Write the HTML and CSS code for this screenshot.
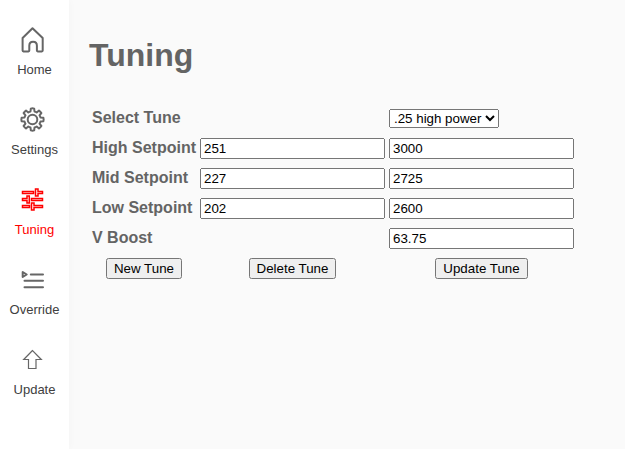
FILE: index.html
```html
<!DOCTYPE html>
<html lang="en">
<head>
<meta charset="utf-8">
<title>Tuning</title>
<link rel="stylesheet" href="styles.css">
</head>
<body>
<nav class="sidebar">
  <a class="item" href="#home"><svg class="icon" viewBox="0 0 32 32"><path stroke-width="2" d="M6.6 14 16.5 4.2 26.7 14v12.6q0 .8-.8.8h-4.2q-.8 0-.8-.8V21.7q0-4-3.800-4t-3.800 4v4.900q0 .8-.8.8H7.400q-.8 0-.8-.8z"/></svg><span>Home</span></a>
  <a class="item" href="#settings"><svg class="icon" viewBox="0 0 32 32"><g transform="translate(16.5 15.5)" stroke-width="2"><circle r="4.800"/><path d="M-1.700-10.900Q0-11.400 1.700-10.900L2-8Q3.200-7.700 4.200-7L6.500-8.900Q7.900-7.900 8.900-6.500L7-4.200Q7.700-3.200 8-2L10.900-1.700Q11.400 0 10.900 1.700L8 2Q7.700 3.200 7 4.200L8.900 6.500Q7.900 7.900 6.500 8.900L4.200 7Q3.200 7.700 2 8L1.700 10.900Q0 11.400-1.700 10.900L-2 8Q-3.200 7.700-4.200 7L-6.500 8.900Q-7.900 7.900-8.900 6.500L-7 4.200Q-7.700 3.200-8 2L-10.900 1.700Q-11.400 0-10.900-1.700L-8-2Q-7.700-3.200-7-4.200L-8.900-6.500Q-7.900-7.900-6.500-8.900L-4.200-7Q-3.200-7.700-2-8z"/></g></svg><span>Settings</span></a>
  <a class="item active" href="#tuning"><svg class="icon" viewBox="0 0 32 32"><path stroke-width="1.5" stroke-linejoin="miter" d="M6.500 7.500h11v2h-11zM19.500 5h2.500v2.500h4.500v2h-4.500v2.500h-2.500zM6.500 14.500h4.500v-2.500h2.300v7h-2.300v-2.500H6.500zM15.500 14.500h11v2h-11zM6.500 21.500h7v2h-7zM15.500 19H18v2.500h8.500v2h-8.500v2.500h-2.500z"/></svg><span>Tuning</span></a>
  <a class="item" href="#override"><svg class="icon" viewBox="0 0 32 32"><path d="M14.800 10.500H27M8.500 16.700H27M8.500 23.300H27"/><path d="M6.700 8v5l4-2.500z"/></svg><span>Override</span></a>
  <a class="item" href="#update"><svg class="icon" viewBox="0 0 32 32"><path stroke-width="1.2" stroke-linejoin="miter" d="M16.500 6.500 7.700 15.500h4.800v9h7.500v-9h5.300z"/></svg><span>Update</span></a>
</nav>
<main class="content">
  <h1>Tuning</h1>
  <form>
  <table>
    <tr><th scope="row"><label for="tune">Select Tune</label></th><td></td><td><select id="tune"><option>.25 high power</option></select></td></tr>
    <tr><th scope="row"><label for="high">High Setpoint</label></th><td><input id="high" type="text" value="251"></td><td><input type="text" aria-label="High Setpoint value" value="3000"></td></tr>
    <tr><th scope="row"><label for="mid">Mid Setpoint</label></th><td><input id="mid" type="text" value="227"></td><td><input type="text" aria-label="Mid Setpoint value" value="2725"></td></tr>
    <tr><th scope="row"><label for="low">Low Setpoint</label></th><td><input id="low" type="text" value="202"></td><td><input type="text" aria-label="Low Setpoint value" value="2600"></td></tr>
    <tr><th scope="row"><label for="boost">V Boost</label></th><td></td><td><input id="boost" type="text" value="63.75"></td></tr>
    <tr class="actions"><td><button type="button">New Tune</button></td><td><button type="button">Delete Tune</button></td><td><button type="button">Update Tune</button></td></tr>
  </table>
  </form>
</main>
</body>
</html>
```

FILE: styles.css
```css
* { box-sizing: border-box; }
body { margin: 0; min-height: 100vh; display: flex; background: #fafafa; color: #646464; font-family: "Liberation Sans", Arial, sans-serif; font-size: 16px; line-height: 26px; }
.sidebar { flex: 0 0 69px; padding-top: 16px; background: #fff; box-shadow: 0 0 8px rgba(0,0,0,.03); }
.item { display: flex; flex-direction: column; align-items: center; height: 80px; padding-top: 8px; gap: 6px; color: #404040; font-size: 13px; line-height: 16px; text-decoration: none; }
.icon { align-self: flex-start; width: 32px; height: 32px; margin-left: 16px; fill: none; stroke: #666; stroke-width: 2; stroke-linecap: round; stroke-linejoin: round; }
.active { color: #f00; }
.active .icon { stroke: #f00; }
.content { flex: 1; padding: 37px 20px; }
h1 { margin: 0 0 28px; font-size: 32px; line-height: 37px; }
th { text-align: left; }
.actions td { text-align: center; }
```
